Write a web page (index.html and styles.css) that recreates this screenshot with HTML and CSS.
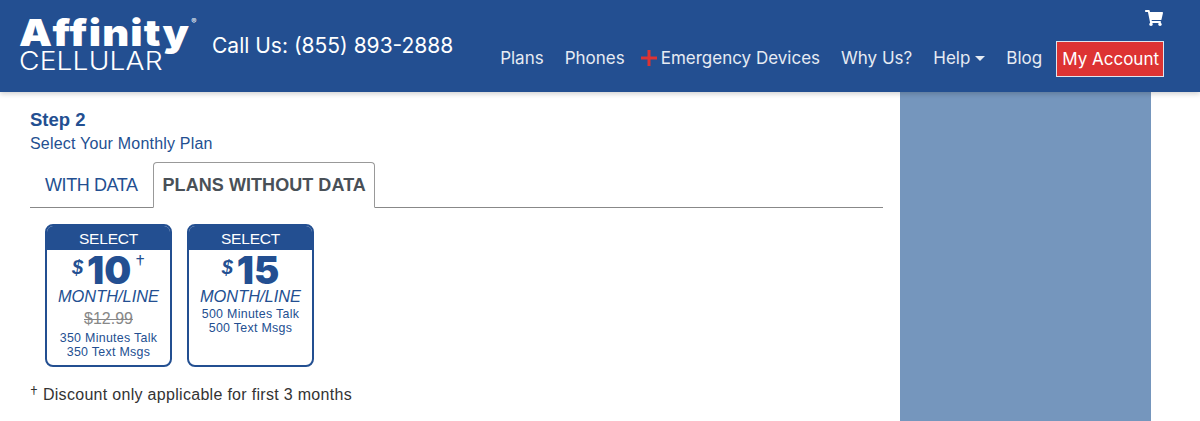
FILE: index.html
```html
<!DOCTYPE html>
<html lang="en">
<head>
<meta charset="utf-8">
<title>Affinity Cellular</title>
<link rel="stylesheet" href="styles.css">
</head>
<body>
<header class="site-header">
  <a class="logo" href="#">
    <span class="logo-top">Affinity<sup class="reg">®</sup></span>
    <span class="logo-bottom">CELLULAR</span>
  </a>
  <div class="call">Call Us: (855) 893-2888</div>
  <div class="header-right">
    <svg class="cart" viewBox="0 0 576 512" aria-hidden="true"><path fill="#fff" d="M528.12 301.319l47.273-208C578.806 78.301 567.391 64 551.99 64H159.208l-9.166-44.81C147.758 8.021 137.93 0 126.529 0H24C10.745 0 0 10.745 0 24v16c0 13.255 10.745 24 24 24h69.883l70.248 343.435C147.325 417.1 136 435.222 136 456c0 30.928 25.072 56 56 56s56-25.072 56-56c0-15.674-6.447-29.835-16.824-40h209.647C430.447 426.165 424 440.326 424 456c0 30.928 25.072 56 56 56s56-25.072 56-56c0-22.172-12.888-41.332-31.579-50.405l5.517-24.276c3.413-15.018-8.002-29.319-23.403-29.319H218.117l-6.545-32h293.145c11.206 0 20.92-7.754 23.403-18.681z"/></svg>
    <nav class="nav">
      <a href="#">Plans</a>
      <a href="#">Phones</a>
      <a href="#" class="emergency"><svg class="plus" viewBox="0 0 16 16" aria-hidden="true"><path fill="#dd3333" d="M6.5 0h3v6.5H16v3H9.500V16h-3V9.500H0v-3h6.500z"/></svg>Emergency Devices</a>
      <a href="#">Why Us?</a>
      <a href="#" class="help">Help<span class="caret"></span></a>
      <a href="#">Blog</a>
      <a href="#" class="account">My Account</a>
    </nav>
  </div>
</header>
<div class="page">
  <main class="main">
    <h2 class="step">Step 2</h2>
    <p class="sub">Select Your Monthly Plan</p>
    <div class="tabs">
      <a class="tab" href="#">WITH DATA</a>
      <a class="tab active" href="#">PLANS WITHOUT DATA</a>
    </div>
    <div class="cards">
      <article class="card">
        <div class="card-head">SELECT</div>
        <div class="price"><span class="dollar">$</span><span class="amount">10</span><span class="dagger">†</span></div>
        <div class="per">MONTH/LINE</div>
        <div class="old">$12.99</div>
        <div class="detail">350 Minutes Talk<br>350 Text Msgs</div>
      </article>
      <article class="card">
        <div class="card-head">SELECT</div>
        <div class="price"><span class="dollar">$</span><span class="amount">15</span></div>
        <div class="per">MONTH/LINE</div>
        <div class="detail">500 Minutes Talk<br>500 Text Msgs</div>
      </article>
    </div>
    <p class="note"><span class="note-mark">†</span> Discount only applicable for first 3 months</p>
  </main>
  <aside class="side"></aside>
</div>
</body>
</html>
```

FILE: styles.css
```css
* { box-sizing: border-box; }
html, body { margin: 0; height: 421px; overflow: hidden; background: #fff; }
body { font-family: "Inter", "Liberation Sans", sans-serif; color: #333; }
a { text-decoration: none; color: inherit; }

.site-header {
  height: 92px;
  background: #234f91;
  display: flex;
  align-items: flex-start;
  padding: 0 36px 0 19px;
  color: #fff;
  box-shadow: 0 2px 5px rgba(0,0,0,.18);
  position: relative;
  z-index: 2;
}
.logo { display: flex; flex-direction: column; width: 178px; margin-top: 15px; font-family: "Inter", sans-serif; transform: scaleX(1.125); transform-origin: left center; }
.logo-top { font-size: 37px; font-weight: 900; line-height: 36px; letter-spacing: 1px; white-space: nowrap; }
.reg { font-size: 7px; font-weight: 400; letter-spacing: 0; vertical-align: top; line-height: 14px; margin-left: 1px; }
.logo-bottom { font-size: 25px; font-weight: 300; line-height: 20px; white-space: nowrap; letter-spacing: .15px; }
.call { margin: 33px 0 0 15px; font-size: 21px; line-height: 25px; white-space: nowrap; }
.header-right { margin-left: auto; display: flex; flex-direction: column; align-items: flex-end; }
.cart { width: 18px; height: 16px; margin: 10px 1px 0 0; display: block; }
.nav { display: flex; align-items: center; margin-top: 15px; font-size: 17px; color: #e6ebf3; }
.nav > a { display: flex; align-items: center; height: 36px; padding-bottom: 2px; white-space: nowrap; margin-right: 21px; }
.nav > a.emergency { margin-right: 21px; margin-left: -5px; }
.plus { width: 16px; height: 16px; margin-right: 4px; }
.caret { width: 0; height: 0; border: 5px solid transparent; border-top-color: #e6ebf3; border-bottom: 0; margin-left: 5px; }
.nav > a.account { margin: 0 0 0 -7px; height: 36px; padding: 0 4px 0 5px; background: #dd3333; border: 1px solid #dfe5ee; color: #fff; }

.page { display: flex; height: 329px; }
.main { width: 900px; padding: 0 17px 0 30px; }
.step { margin: 17px 0 0; font-size: 18.5px; line-height: 22px; font-weight: 700; color: #234f91; font-family: "Liberation Sans", sans-serif; }
.sub { margin: 1px 0 0; font-size: 16px; line-height: 24px; color: #234f91; font-family: "Liberation Sans", sans-serif; letter-spacing: .2px; }
.tabs { display: flex; margin-top: 6px; height: 46px; border-bottom: 1px solid #888; font-family: "Liberation Sans", sans-serif; font-size: 18px; }
.tab { display: flex; align-items: center; padding: 0 15px; color: #234f91; height: 46px; letter-spacing: -.42px; }
.tab.active { font-weight: 700; color: #495057; padding: 0 8px 0 9px; letter-spacing: .06px; border: 1px solid #999; border-bottom: 1px solid #fff; border-radius: 4px 4px 0 0; background: #fff; }
.cards { display: flex; gap: 15px; margin: 16px 0 0 15px; }
.card { width: 127px; height: 143px; border: 2px solid #234f91; border-radius: 8px; text-align: center; color: #234f91; font-family: "Liberation Sans", sans-serif; overflow: hidden; }
.card-head { background: #234f91; color: #fff; font-size: 15.5px; letter-spacing: -.2px; height: 24px; line-height: 25px; }
.price { display: flex; justify-content: center; align-items: flex-start; height: 38px; }
.dollar { font-style: italic; font-weight: 700; font-size: 20px; line-height: 34px; margin-right: 4px; }
.amount { font-family: "Inter", sans-serif; font-weight: 900; font-size: 38px; line-height: 36px; margin-top: 2px; }
.dagger { font-family: "Inter", sans-serif; font-weight: 300; font-size: 20px; line-height: 26px; margin-left: 4px; }
.per { font-style: italic; font-size: 16.4px; line-height: 16px; margin-bottom: 2px; }
.old { color: #888; font-size: 16px; line-height: 20px; text-decoration: line-through; margin-top: 5px; }
.detail { font-size: 12.4px; line-height: 14px; letter-spacing: .3px; margin-top: 3px; }
.old + .detail { margin-top: 2px; }
.note { margin: 18px 0 0; font-size: 16px; line-height: 20px; color: #333; font-family: "Liberation Sans", sans-serif; letter-spacing: .3px; }
.note-mark { font-family: "Inter", sans-serif; font-weight: 300; font-size: 16px; line-height: 0; vertical-align: 2px; }
.side { width: 251px; background: #7596bd; }
```
